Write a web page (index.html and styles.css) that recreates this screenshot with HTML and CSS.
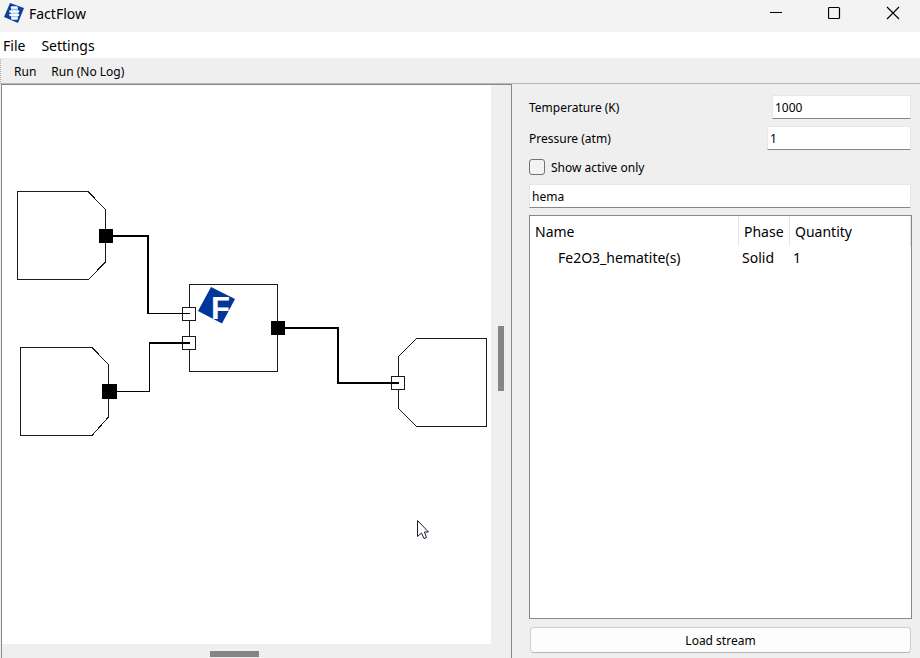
FILE: index.html
```html
<!DOCTYPE html>
<html lang="en">
<head>
<meta charset="utf-8">
<title>FactFlow</title>
<link rel="stylesheet" href="styles.css">
</head>
<body>
<header class="titlebar">
  <svg class="app-icon" width="20" height="20" viewBox="0 0 20 20" aria-hidden="true">
    <path d="M6 0 20 5 14 20 0 14Z" fill="#10409c"/>
    <path d="M7 4h7v12H7Z" fill="#8cbcea"/>
    <path d="M8 4.500h4.500M6.500 8.500h7.500M6.500 12h7.500M8.500 15.500h4" stroke="#f4faff" stroke-width="2.600" stroke-linecap="round"/>
  </svg>
  <span class="app-name">FactFlow</span>
  <div class="window-controls">
    <button type="button" aria-label="Minimize"><svg width="14" height="14" viewBox="0 0 14 14"><path d="M0 6.500h12" stroke="#000"/></svg></button>
    <button type="button" aria-label="Maximize"><svg width="14" height="14" viewBox="0 0 14 14"><rect x="0.500" y="1.500" width="11" height="11" rx="1" fill="none" stroke="#000" stroke-width="1.200"/></svg></button>
    <button type="button" aria-label="Close"><svg width="14" height="14" viewBox="0 0 14 14"><path d="M1 1 13 13M13 1 1 13" stroke="#000" stroke-width="1.200"/></svg></button>
  </div>
</header>
<nav class="menubar">
  <button type="button">File</button>
  <button type="button">Settings</button>
</nav>
<div class="toolbar">
  <button type="button">Run</button>
  <button type="button">Run (No Log)</button>
</div>
<main class="workspace">
  <section class="canvas" aria-label="Flowsheet">
    <svg class="diagram" viewBox="2 85 489 559" preserveAspectRatio="xMinYMin slice">
      <g fill="none" stroke="#1a1a1a" shape-rendering="crispEdges">
        <path d="M17.500 191.500H88L105.500 209.500V262L88.500 279.500H17.500Z"/>
        <path d="M20.500 347.500H92L108.500 364.500V417L92 435.500H20.500Z"/>
        <path d="M189.500 284.500H277.500V371.500H189.500Z"/>
        <path d="M416.500 338.500H486.500V426.500H416.500L398.500 408.500V356.500Z"/>
      </g>
      <path d="M211 287 235 299 222 323.500 198 311Z" fill="#00359a"/>
      <text class="logo-letter" x="211" y="319">F</text>
      <g fill="#fff" stroke="#1a1a1a">
        <rect x="182.500" y="307.500" width="13" height="13"/>
        <rect x="182.500" y="336.500" width="13" height="13"/>
        <rect x="391.500" y="376.500" width="13" height="13"/>
      </g>
      <g fill="none" stroke="#000" shape-rendering="crispEdges">
        <path d="M112 236H148V313" stroke-width="2"/>
        <path d="M147 313.500H190"/>
        <path d="M116 391.500H149.500V343"/>
        <path d="M149 343H190M284 328H338V383H399" stroke-width="2"/>
      </g>
      <g>
        <rect x="99" y="229" width="14" height="14"/>
        <rect x="102" y="384" width="15" height="15"/>
        <rect x="271" y="321" width="14" height="14"/>
      </g>
      <path d="M417.500 520.500V536.500L421.500 533 424 538.500 426.500 537.500 424.500 532H428.500Z" fill="#fff" stroke="#26162c"/>
    </svg>
    <div class="scroll-y"><div class="thumb-y"></div></div>
    <div class="scroll-x"><div class="thumb-x"></div></div>
  </section>
  <form class="panel">
    <div class="field">
      <label for="temperature">Temperature (K)</label>
      <input class="text-box temperature" id="temperature" type="text" value="1000">
    </div>
    <div class="field">
      <label for="pressure">Pressure (atm)</label>
      <input class="text-box pressure" id="pressure" type="text" value="1">
    </div>
    <div class="check">
      <input id="active-only" type="checkbox">
      <label for="active-only">Show active only</label>
    </div>
    <input class="text-box search" type="text" value="hema" aria-label="Filter species">
    <div class="species">
      <table>
        <thead><tr><th class="name">Name</th><th class="phase">Phase</th><th>Quantity</th></tr></thead>
        <tbody><tr><td class="name">Fe2O3_hematite(s)</td><td>Solid</td><td>1</td></tr></tbody>
      </table>
    </div>
    <button class="load" type="button">Load stream</button>
  </form>
</main>
</body>
</html>
```

FILE: styles.css
```css
* { box-sizing: border-box; }

body {
  margin: 0;
  height: 100vh;
  display: flex;
  flex-direction: column;
  overflow: hidden;
  background: #efefef;
  color: #000;
  font: 12px/16px "Noto Sans", sans-serif;
}

button {
  border: 0;
  padding: 0;
  background: none;
  color: inherit;
  font: inherit;
}

.titlebar {
  display: flex;
  align-items: center;
  height: 32px;
  flex: none;
  padding: 0 20px 6px 4px;
  background: #f3f3f3;
}

.app-name { margin-left: 5px; padding-top: 2px; font-size: 14px; }

.window-controls {
  display: flex;
  gap: 44px;
  margin-left: auto;
}

.window-controls button { height: 14px; width: 14px; }
.window-controls svg { display: block; }

.menubar {
  display: flex;
  gap: 16px;
  height: 27px;
  flex: none;
  padding: 2px 3px 0;
  background: #fff;
  border-bottom: 1px solid #f0f0f0;
  font-size: 14px;
}

.toolbar {
  display: flex;
  gap: 15px;
  height: 25px;
  flex: none;
  padding: 2px 13px 0;
  border-left: 1px dotted #aaa;
  border-bottom: 1px solid #b8b8b8;
}

.workspace {
  flex: 1;
  min-height: 0;
  display: grid;
  grid-template-columns: 512fr 408fr;
}

.canvas {
  min-width: 0;
  min-height: 0;
  display: grid;
  grid-template-columns: 1fr 20px;
  grid-template-rows: 1fr 14px;
  margin-left: 1px;
  border: 1px solid #85888d;
  border-bottom: 0;
}

.diagram {
  display: block;
  width: 100%;
  height: 100%;
  min-height: 0;
  background: #fff;
}

.logo-letter {
  font: bold 31px "Liberation Sans", sans-serif;
  fill: #fff;
}

.scroll-y { padding: 241px 7px 0; }
.thumb-y { height: 65px; background: #858585; }
.scroll-x { padding: 7px 0 0 208px; }
.thumb-x { width: 49px; height: 6px; background: #858585; }

.panel {
  min-width: 0;
  display: flex;
  flex-direction: column;
  padding: 11px 8px 5px 17px;
}

.panel label { padding-top: 2px; }

.field {
  display: flex;
  align-items: center;
  justify-content: space-between;
  margin: 0 1px 7px 0;
}

.text-box {
  height: 24px;
  padding: 0 2px;
  border: 1px solid #e6e6e6;
  border-bottom-color: #85858a;
  border-radius: 1px;
  background: #fff;
  color: #000;
  font: inherit;
}

.temperature { width: 139px; }
.pressure { width: 144px; }

.check {
  display: flex;
  align-items: center;
  gap: 6px;
  height: 20px;
  margin-bottom: 7px;
}

.check input {
  appearance: none;
  width: 16px;
  height: 16px;
  margin: 0;
  border: 1px solid #77716e;
  border-radius: 3px;
  background: #f3f3f3;
}

.search { margin: 0 1px 7px 0; }

.species {
  flex: 1;
  min-height: 0;
  border: 1px solid #85888d;
  background: #fff;
}

.species table {
  width: 100%;
  table-layout: fixed;
  border-collapse: separate;
  border-spacing: 0;
  font-size: 14px;
}

.species th {
  height: 30px;
  padding: 2px 5px 0;
  border-right: 1px solid #e5e5e5;
  font-weight: 400;
  text-align: left;
}

.species td { height: 24px; padding: 0 3px; }
.species th.name { width: 209px; }
.species th.phase { width: 51px; }
.species td.name { padding-left: 28px; }

.load {
  height: 26px;
  margin: 8px 1px 0;
  padding-top: 2px;
  border: 1px solid #cfcfcf;
  border-bottom-color: #b8b8b8;
  border-radius: 4px;
  background: #fdfdfd;
}
```
